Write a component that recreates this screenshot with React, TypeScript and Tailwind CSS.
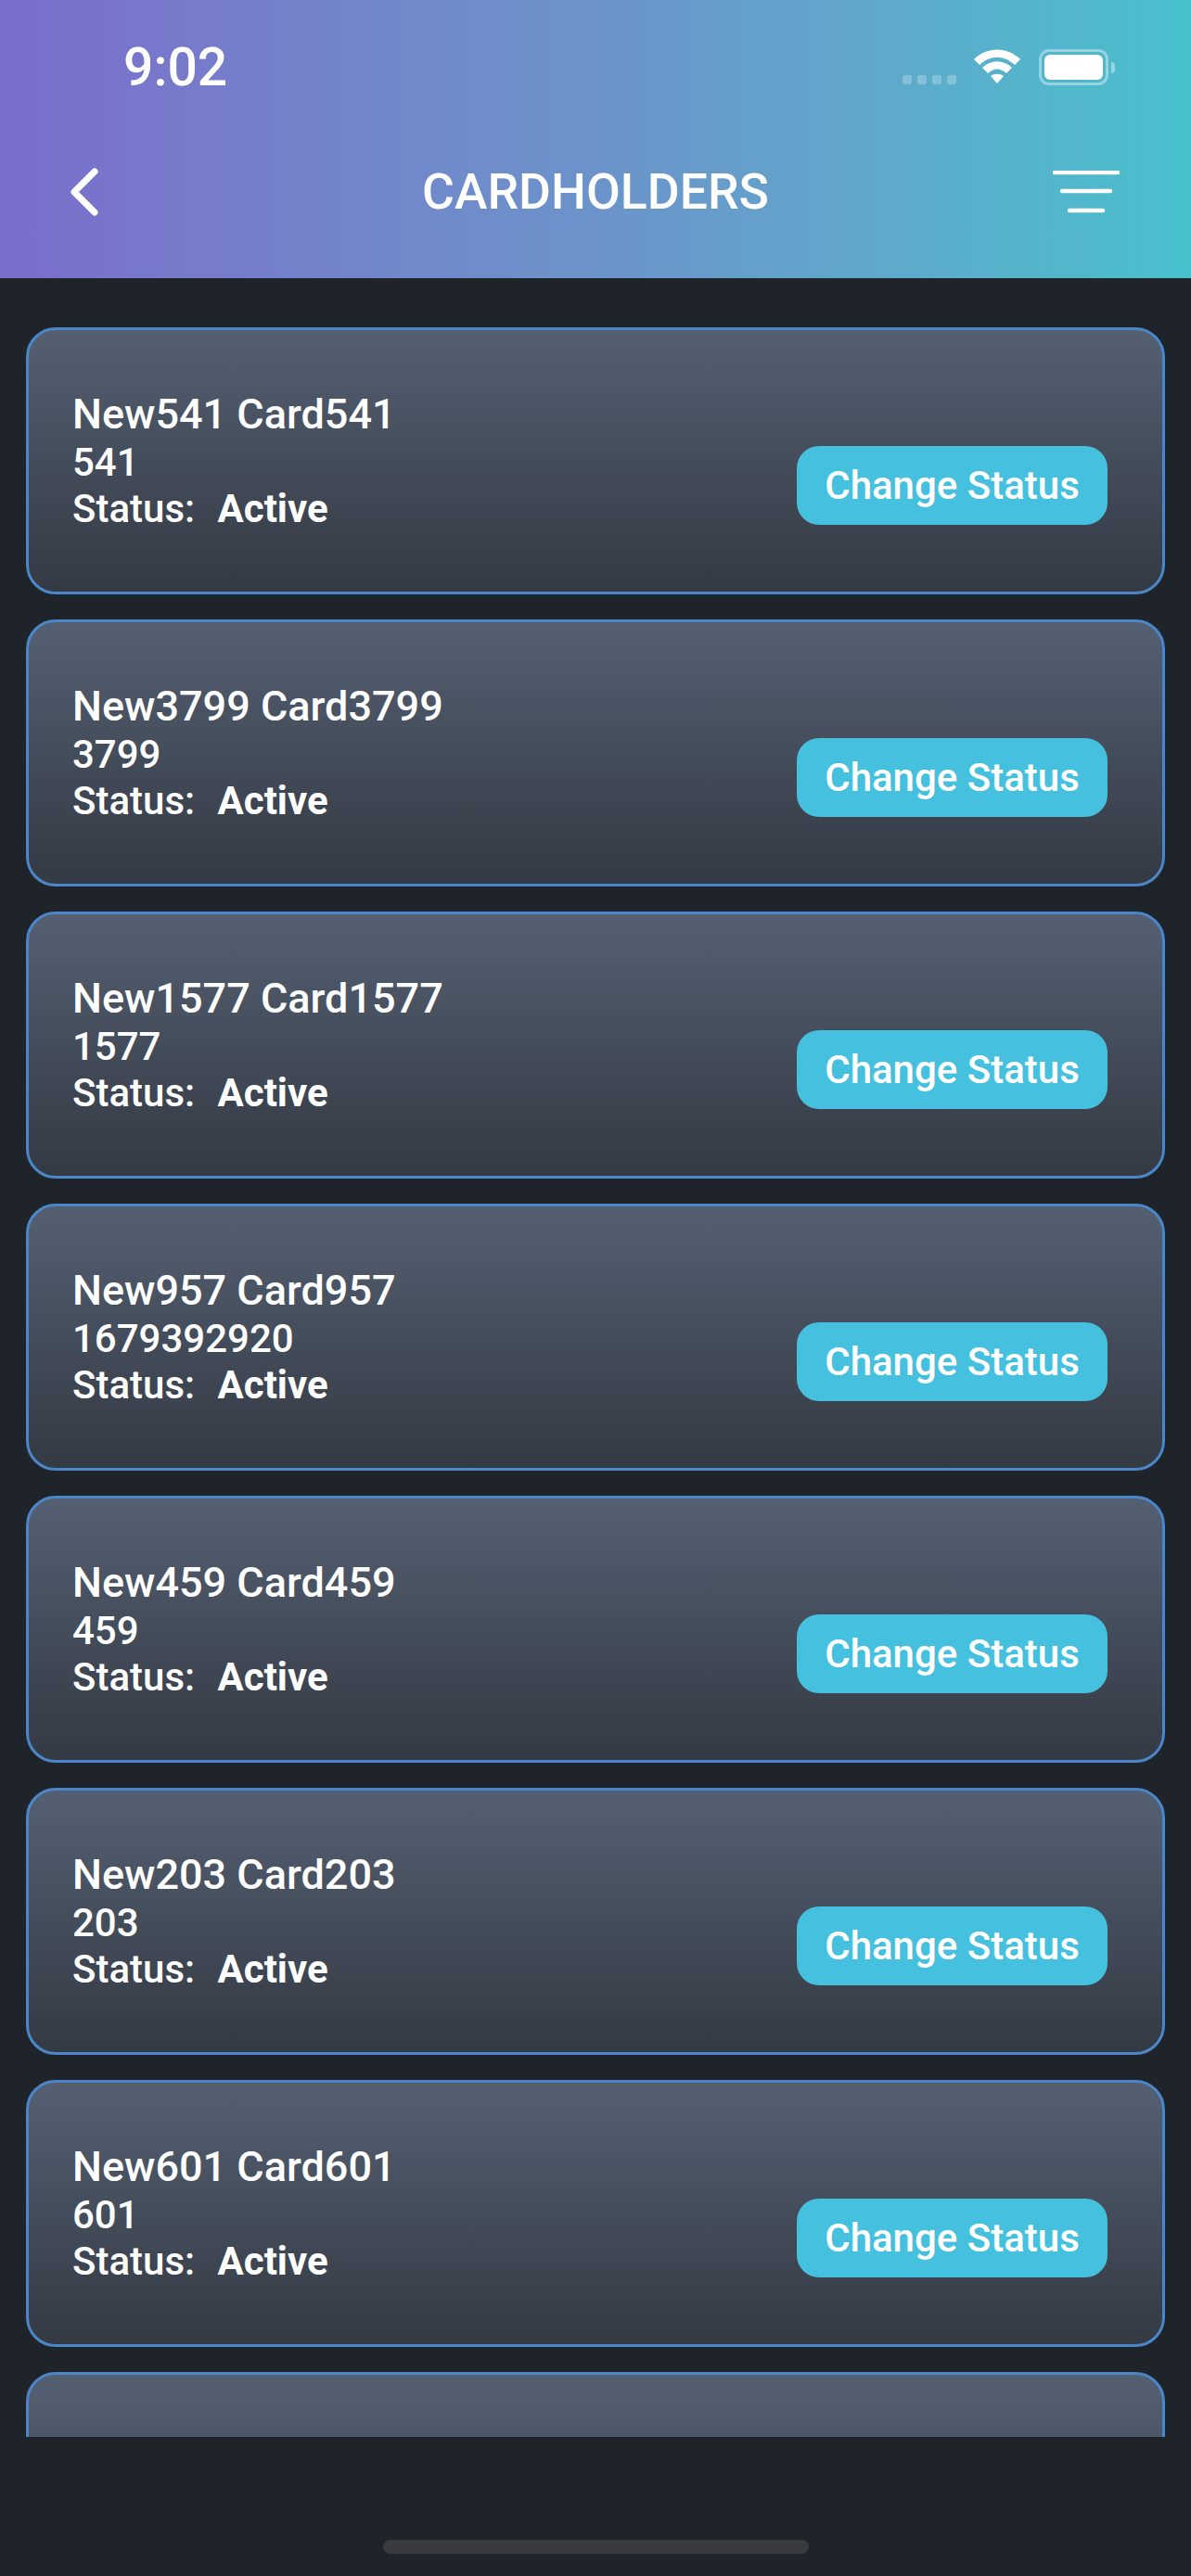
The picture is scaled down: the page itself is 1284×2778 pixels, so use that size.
import React from 'react';

const cardholders = [
  { name: 'New541 Card541', id: '541' },
  { name: 'New3799 Card3799', id: '3799' },
  { name: 'New1577 Card1577', id: '1577' },
  { name: 'New957 Card957', id: '1679392920' },
  { name: 'New459 Card459', id: '459' },
  { name: 'New203 Card203', id: '203' },
  { name: 'New601 Card601', id: '601' },
];

const StatusIcons: React.FC = () => (
  <div className="flex items-start">
    <div className="mt-[28px] mr-[19px] flex gap-[6px]">
      {[0, 1, 2, 3].map((i) => (
        <span key={i} className="h-[10px] w-[10px] rounded-[3px] bg-white/25" />
      ))}
    </div>
    <svg width="50" height="38" viewBox="0 0 50 38" fill="white">
      <path d="M0 11 C14 -3 36 -3 50 11 L44 17 C32 6 18 6 6 17 Z" />
      <path d="M9 20 C18 11 32 11 41 20 L35 26 C28 20 22 20 15 26 Z" />
      <path d="M18 29 C22 26 28 26 32 29 L25 37 Z" />
    </svg>
    <div className="ml-[20px] flex items-center">
      <div className="h-[39px] w-[75px] rounded-[11px] border-[3px] border-white/40 p-[3px]">
        <div className="h-full w-full rounded-[6px] bg-white" />
      </div>
      <div className="ml-[3px] h-[12px] w-[4px] rounded-r-full bg-white/40" />
    </div>
  </div>
);

const BackIcon: React.FC = () => (
  <svg width="36" height="54" viewBox="0 0 36 54" fill="none" stroke="white" strokeWidth="7" strokeLinecap="round" strokeLinejoin="round">
    <path d="M29 5 L7 27 L29 49" />
  </svg>
);

const FilterIcon: React.FC = () => (
  <svg width="72" height="46" viewBox="0 0 72 46" fill="none" stroke="white" strokeWidth="4.5" strokeLinecap="round">
    <path d="M2 2 H70" />
    <path d="M10 22 H62" />
    <path d="M18 43 H54" />
  </svg>
);

const CardRow: React.FC<{ name: string; id: string }> = ({ name, id }) => (
  <div className="flex h-[288px] shrink-0 items-start justify-between rounded-[32px] border-[3px] border-[#4a86c8] bg-gradient-to-b from-[#546072] to-[#343a44] pl-[47px] pr-[59px] pt-[64px] text-white">
    <div className="font-medium">
      <div className="text-[45px] leading-[54px]">{name}</div>
      <div className="text-[42px] leading-[50px]">{id}</div>
      <div className="text-[42px] leading-[50px]">
        Status: <span className="ml-[14px] font-bold">Active</span>
      </div>
    </div>
    <button className="mt-[61px] h-[85px] w-[335px] rounded-[24px] bg-[#45c1df] text-[42px] font-medium text-white">
      Change Status
    </button>
  </div>
);

export default function App() {
  return (
    <div className="flex h-[2778px] w-[1284px] flex-col bg-[#1f232a] font-['Roboto',sans-serif]">
      <header className="h-[300px] shrink-0 bg-gradient-to-r from-[#7a6ecb] via-[#6b93ca] to-[#47c0cc] text-white">
        <div className="flex items-start justify-between pl-[133px] pr-[82px] pt-[53px]">
          <span className="text-[57px] font-medium leading-[39px]">9:02</span>
          <StatusIcons />
        </div>
        <div className="mt-[88px] flex items-center pl-[73px] pr-[77px]">
          <div className="flex-1">
            <BackIcon />
          </div>
          <h1 className="ml-[4px] text-[53.5px] font-medium uppercase leading-[54px]">Cardholders</h1>
          <div className="flex flex-1 justify-end">
            <FilterIcon />
          </div>
        </div>
      </header>
      <main className="mx-[28px] h-[2328px] overflow-hidden pt-[53px]">
        <div className="flex flex-col gap-[27px]">
          {cardholders.map((c) => (
            <CardRow key={c.id} name={c.name} id={c.id} />
          ))}
          {/* next row is only peeking in above the fold, its text is not visible yet */}
          <div className="h-[288px] shrink-0 rounded-[32px] border-[3px] border-[#4a86c8] bg-gradient-to-b from-[#546072] to-[#343a44]" />
        </div>
      </main>
      <div className="mt-[111px] flex justify-center">
        <div className="h-[15px] w-[459px] rounded-full bg-[#3a3b3e]" />
      </div>
    </div>
  );
}
